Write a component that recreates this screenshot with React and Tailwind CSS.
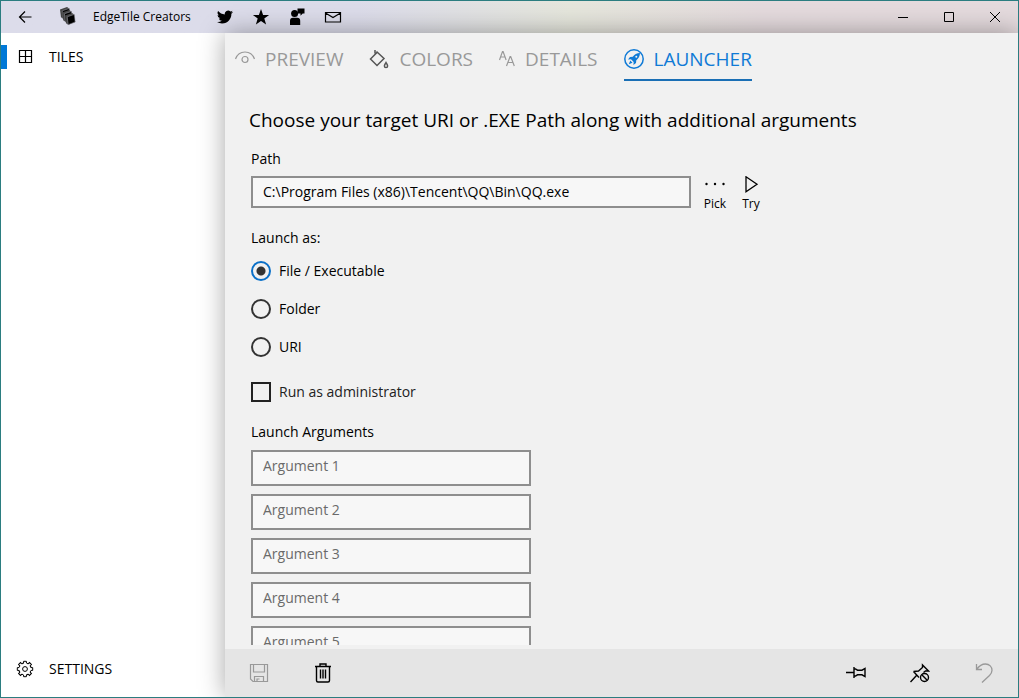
import React, { useState } from 'react';

const Icon = ({ children, className = 'size-5', fill = 'none', width = 1.2 }) => (
  <svg
    viewBox="0 0 20 20"
    className={`shrink-0 ${className}`}
    fill={fill}
    stroke={fill === 'none' ? 'currentColor' : 'none'}
    strokeWidth={width}
    aria-hidden="true"
  >
    {children}
  </svg>
);

const BackIcon = () => (
  <Icon>
    <path d="M16.5 10H4.5M10 4.5 4.5 10l5.5 5.5" />
  </Icon>
);

const CubesIcon = () => (
  <Icon fill="currentColor">
    {[
      'translate(0 -1)',
      'translate(2.2 2)',
      'translate(5 5)',
    ].map((transform) => (
      <g key={transform} transform={transform}>
        <path d="M3 3.5 10 1l2.2 1.4 1 7.6-7 2.7L4 11.200z" fill="#444" />
        <path d="m5.2 4.800 7-2.400 1 7.600-7 2.700z" fill="#000" stroke="#8f8f99" strokeWidth=".6" />
      </g>
    ))}
  </Icon>
);

const TwitterIcon = () => (
  <svg viewBox="0 0 24 24" className="size-4 shrink-0" fill="currentColor" aria-hidden="true">
    <path d="M23.95 4.57a10 10 0 0 1-2.82.77 4.96 4.96 0 0 0 2.16-2.72c-.95.55-2 .95-3.13 1.18a4.92 4.92 0 0 0-8.38 4.48C7.69 8.1 4.07 6.13 1.64 3.16a4.93 4.93 0 0 0 1.52 6.57 4.9 4.9 0 0 1-2.23-.61v.06a4.92 4.92 0 0 0 3.95 4.83 5 5 0 0 1-2.21.08 4.94 4.94 0 0 0 4.6 3.42A9.87 9.87 0 0 1 0 19.54a14 14 0 0 0 7.55 2.21c9.05 0 14-7.5 14-13.98 0-.21 0-.42-.02-.63a9.94 9.94 0 0 0 2.42-2.57z" />
  </svg>
);

const StarIcon = () => (
  <Icon fill="currentColor">
    <path d="m10 2 2.1 5.9h6l-4.8 3.7 1.8 6-5.1-3.6-5.1 3.6 1.8-6-4.8-3.7h6z" />
  </Icon>
);

const FeedbackIcon = () => (
  <Icon fill="currentColor">
    <path d="M10.5 1.5h7v5h-1.8l-2.2 2.3V6.5h-3zM3 18v-4.2a3 3 0 0 1 3-3h4.2a3 3 0 0 1 3 3V18z" />
    <circle cx="7.6" cy="6.6" r="3.5" />
  </Icon>
);

const MailIcon = () => (
  <Icon>
    <path d="M2.5 5.5h15v9.5h-15zM2.5 6l7.5 4.6L17.5 6" />
  </Icon>
);

const TilesIcon = () => (
  <Icon>
    <path d="M4.5 3.5h12v12h-12zM10.5 3.5v12M4.5 9.5h12" />
  </Icon>
);

const GEAR_TEETH = [0, 45, 90, 135, 180, 225, 270, 315];

const GearIcon = () => (
  <Icon width={1}>
    <circle cx="10" cy="10" r="2.4" />
    {GEAR_TEETH.map((angle) => (
      <path
        key={angle}
        transform={`rotate(${angle} 10 10)`}
        d="M7.7 4.5 8.6 4V2.3h2.8V4l.9.5 1.1-.1"
      />
    ))}
  </Icon>
);

const EyeIcon = () => (
  <Icon>
    <path d="M.5 10C2 5.8 5.5 3 10 3s8 2.8 9.5 7" />
    <circle cx="10" cy="10.5" r="3" />
  </Icon>
);

const BucketIcon = () => (
  <Icon width={1.5}>
    <path d="M7.5 2.5 15 9.5 8 16.5 1.5 10 8.5 3M6 1v3.5" />
    <path d="M17 13.5c.9 1.6 1.6 2.4 1.6 3.4a1.6 1.6 0 0 1-3.2 0c0-1 .7-1.8 1.6-3.4z" />
  </Icon>
);

const LettersIcon = () => (
  <svg viewBox="0 0 16 20" className="w-4 h-5" fill="none" stroke="currentColor" strokeWidth="1.2" aria-hidden="true">
    <path d="m.5 11 3-8.5h.6l3 8.5M1.7 8H6M7.5 17l3.6-9.5h.6l3.6 9.5M9 13.5h5" />
  </svg>
);

const RocketIcon = () => (
  <Icon>
    <circle cx="10" cy="10" r="9.2" strokeWidth="1.5" />
    <path
      d="M16 4c-3.3.2-5.6 1.5-7.2 3.7L6 8l-2 2.500 3-.2 2.700 2.700-.3 3 2.600-2 .3-2.800C14.500 9.600 15.800 7.300 16 4zM6.300 11.500l2.200 2.200-3.700 1.600z"
      fill="currentColor"
      stroke="none"
    />
    <circle cx="12.3" cy="7.7" r="1" fill="#f1f1f1" stroke="none" />
  </Icon>
);

const SaveIcon = () => (
  <Icon>
    <path d="M1.5 1.5h17v17H4l-2.500-2.500zM4.500 1.500v7.500h11V1.500M5.500 18.500v-5h9v5M8 18.500v-2.500h2.500" />
  </Icon>
);

const TrashIcon = () => (
  <Icon width={1.4}>
    <path d="M2 3.5h16M7 3.500V1h6v2.500M3.500 3.500v14a1.500 1.500 0 0 0 1.500 1.500h10a1.500 1.500 0 0 0 1.500-1.500v-14M7.500 6.500v9M10 6.500v9M12.500 6.500v9" />
  </Icon>
);

const PinIcon = () => (
  <Icon width={1.4}>
    <path d="M0 9.5h8M8 4v11M8 6h1.5l2 1.200h4.500l3-1.700v8l-3-1.700h-4.500l-2 1.200H8z" />
  </Icon>
);

const UnpinIcon = () => (
  <Icon width={1.4}>
    <path d="m.5 19 6-6.5M3.500 8.500 9 14.500M3.500 8.500l5-.5 4-3.500V2l6 6h-3l-2 1.500" />
    <circle cx="14.5" cy="14.5" r="4" />
    <path d="m11.8 11.8 5.4 5.4" />
  </Icon>
);

const UndoIcon = () => (
  <Icon width={1.3}>
    <path d="M2.5 1v5.500H8M2.500 6.500C5 3 8 1 11.500 1c4 0 6.500 3 6.500 6.300 0 2.200-1 3.700-2.500 5.200L8 19.500" />
  </Icon>
);

const tabs = [
  { label: 'PREVIEW', icon: <EyeIcon /> },
  { label: 'COLORS', icon: <BucketIcon />, iconClass: 'text-[#555]' },
  { label: 'DETAILS', icon: <LettersIcon /> },
  { label: 'LAUNCHER', icon: <RocketIcon />, active: true },
];

const launchTypes = ['File / Executable', 'Folder', 'URI'];

const TitleBar = () => (
  <header className="h-8 shrink-0 flex items-center justify-between bg-linear-to-r from-[#dcdcea] from-35% via-[#e5e6dc] via-56% to-[#e4dadd] to-75%">
    <div className="flex items-center">
      <button aria-label="Back" className="w-12 h-8 flex items-center justify-center">
        <BackIcon />
      </button>
      <span className="ml-2 mr-4 flex">
        <CubesIcon />
      </span>
      <h1 className="w-[114px] text-xs whitespace-nowrap">EdgeTile Creators</h1>
      <div className="flex">
        {[
          ['Twitter', <TwitterIcon />],
          ['Rate', <StarIcon />],
          ['Feedback', <FeedbackIcon />],
          ['Mail', <MailIcon />],
        ].map(([label, icon]) => (
          <button key={label} aria-label={label} className="w-9 h-8 flex items-center justify-center">
            {icon}
          </button>
        ))}
      </div>
    </div>
    <div className="flex">
      {[
        ['Minimize', 'M5 10.5h10'],
        ['Maximize', 'M5.5 5.5h9v9h-9z'],
        ['Close', 'm5 5 10 10M15 5 5 15'],
      ].map(([label, path]) => (
        <button key={label} aria-label={label} className="w-[46px] h-8 flex items-center justify-center">
          <Icon width={1}>
            <path d={path} />
          </Icon>
        </button>
      ))}
    </div>
  </header>
);

const Sidebar = () => (
  <aside className="w-56 shrink-0 flex flex-col justify-between bg-white text-sm">
    <a href="#tiles" className="h-12 flex items-center">
      <span className="w-1.5 h-6 bg-[#0078d7]"></span>
      <span className="ml-2 mr-3.5 flex">
        <TilesIcon />
      </span>
      TILES
    </a>
    <a href="#settings" className="h-14 flex items-center">
      <span className="ml-3.5 mr-3.5 flex">
        <GearIcon />
      </span>
      SETTINGS
    </a>
  </aside>
);

const Tabs = () => (
  <nav className="h-12 shrink-0 flex items-stretch gap-[26px] px-2.5 text-[19px]">
    {tabs.map((tab) => (
      <button
        key={tab.label}
        className={`flex items-center gap-2.5 border-b-2 pt-1.5 ${
          tab.active ? 'border-[#1a6fb5] text-[#0f7ad6]' : 'border-transparent text-[#999]'
        }`}
      >
        <span className={tab.iconClass}>{tab.icon}</span>
        {tab.label}
      </button>
    ))}
  </nav>
);

const LauncherForm = () => {
  const [launchAs, setLaunchAs] = useState(launchTypes[0]);

  return (
    <div className="flex-1 min-h-0 overflow-hidden px-6 mb-1 text-sm">
      <h2 className="pt-5 text-[19px] leading-[38px] whitespace-nowrap">
        Choose your target URI or .EXE Path along with additional arguments
      </h2>
      <div className="pl-0.5 pt-2.5">
        <label htmlFor="path" className="block leading-5">
          Path
        </label>
        <div className="flex items-start mt-[7px]">
          <input
            id="path"
            type="text"
            defaultValue="C:\Program Files (x86)\Tencent\QQ\Bin\QQ.exe"
            className="w-[440px] h-8 px-2.5 pb-0.5 border-2 border-[#8e8e8e] bg-[#f7f7f7] outline-none"
          />
          <button className="w-9 ml-1.5 flex flex-col items-center text-xs leading-4">
            <Icon fill="currentColor">
              <circle cx="1.5" cy="8" r="1.2" />
              <circle cx="10" cy="8" r="1.2" />
              <circle cx="18.5" cy="8" r="1.2" />
            </Icon>
            Pick
          </button>
          <button className="w-9 flex flex-col items-center text-xs leading-4">
            <Icon width={1.3}>
              <path d="M5 .8v15L16 8.3z" />
            </Icon>
            Try
          </button>
        </div>

        <fieldset className="mt-4">
          <legend className="leading-5 mb-1">Launch as:</legend>
          {launchTypes.map((type) => (
            <label key={type} className="h-[38px] flex items-center gap-2">
              <input
                type="radio"
                name="launchAs"
                checked={launchAs === type}
                onChange={() => setLaunchAs(type)}
                className="appearance-none size-5 rounded-full border-2 border-[#333] checked:border-[#0a70c8] checked:bg-[radial-gradient(circle,#333_4px,transparent_5px)]"
              />
              {type}
            </label>
          ))}
        </fieldset>

        <label className="mt-4 h-5 flex items-center gap-2 text-[#222]">
          <input
            type="checkbox"
            className="appearance-none size-5 border-2 border-[#222] checked:bg-[#0078d7]"
          />
          Run as administrator
        </label>

        <h3 className="mt-5 mb-2 leading-5">Launch Arguments</h3>
        <div className="flex flex-col gap-2">
          {[1, 2, 3, 4, 5].map((n) => (
            <input
              key={n}
              type="text"
              aria-label={`Argument ${n}`}
              placeholder={`Argument ${n}`}
              className="w-[280px] h-9 px-2.5 pb-1.5 border-2 border-[#8e8e8e] bg-[#f7f7f7] placeholder:text-[#6a6a6a] outline-none"
            />
          ))}
        </div>
      </div>
    </div>
  );
};

const CommandBar = () => (
  <footer className="h-12 shrink-0 flex items-center justify-between px-0.5 bg-[#e5e5e5]">
    <div className="flex">
      <button aria-label="Save" disabled className="w-16 h-12 flex items-center justify-center text-[#999]">
        <SaveIcon />
      </button>
      <button aria-label="Delete" className="w-16 h-12 flex items-center justify-center">
        <TrashIcon />
      </button>
    </div>
    <div className="flex">
      <button aria-label="Pin" className="w-16 h-12 flex items-center justify-center">
        <PinIcon />
      </button>
      <button aria-label="Unpin" className="w-16 h-12 flex items-center justify-center">
        <UnpinIcon />
      </button>
      <button aria-label="Undo" disabled className="w-16 h-12 flex items-center justify-center text-[#999]">
        <UndoIcon />
      </button>
    </div>
  </footer>
);

export default function App() {
  return (
    <div className="h-screen flex flex-col overflow-hidden border border-[#2b7d80] text-black font-['Open_Sans','Segoe_UI',sans-serif]">
      <TitleBar />
      <div className="flex-1 min-h-0 flex">
        <Sidebar />
        <main className="flex-1 min-w-0 flex flex-col bg-[#f1f1f1] shadow-[0_0_24px_rgba(0,0,0,0.35)]">
          <Tabs />
          <LauncherForm />
          <CommandBar />
        </main>
      </div>
    </div>
  );
}
